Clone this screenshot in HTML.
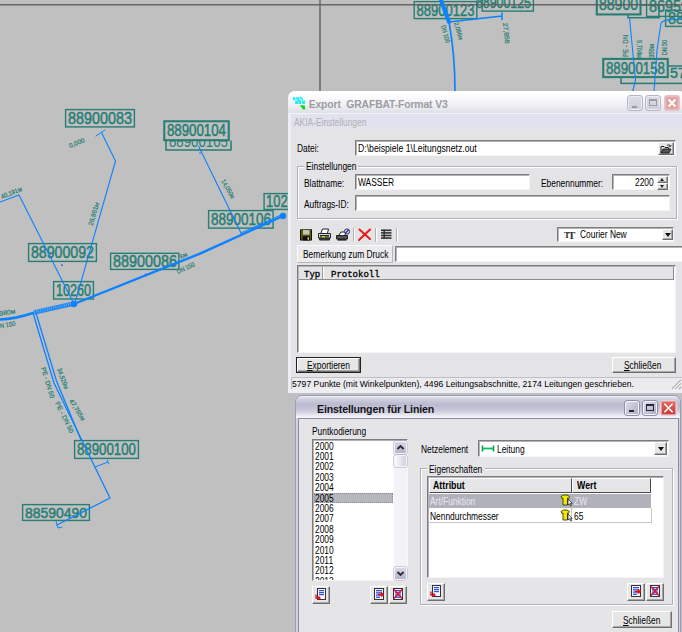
<!DOCTYPE html>
<html lang="de">
<head>
<meta charset="utf-8">
<title>Export GRAFBAT-Format V3</title>
<style>
html,body{margin:0;padding:0;}
body{width:682px;height:632px;overflow:hidden;background:#c0c0c0;position:relative;font-family:"Liberation Sans",sans-serif;font-size:11px;color:#000;}
#map{position:absolute;left:0;top:0;width:682px;height:632px;}
.abs{position:absolute;}
.win{position:absolute;box-sizing:border-box;}
.lbl{position:absolute;white-space:nowrap;line-height:12px;font-size:10px;transform:scaleX(.84);transform-origin:0 0;margin-top:1px;}
.inp{position:absolute;box-sizing:border-box;background:#fff;border:1px solid;border-color:#7c7c7c #f6f6f6 #f6f6f6 #7c7c7c;box-shadow:inset 1px 1px 0 #b4b4b4;white-space:nowrap;font-size:11px;line-height:13px;overflow:hidden;}
.btn{position:absolute;box-sizing:border-box;background:#e6e6e6;border:1px solid;border-color:#fff #6e6e6e #6e6e6e #fff;box-shadow:inset -1px -1px 0 #a8a8a8;text-align:center;font-size:11px;white-space:nowrap;}
.grp{position:absolute;box-sizing:border-box;border:1px solid #b2b2b6;box-shadow:inset 1px 1px 0 #fff, 1px 1px 0 #fff;}
.tb{position:absolute;box-sizing:border-box;width:16px;height:16px;border:1px solid #b6b6c4;border-radius:3px;background:linear-gradient(#dedee8,#cdcdd9);box-shadow:inset 0 0 0 1px #ececf3;}
.mono{position:absolute;font-family:"Liberation Mono",monospace;font-weight:normal;-webkit-text-stroke:0.3px #000;font-size:9px;line-height:11px;white-space:nowrap;}
.tri{position:absolute;width:0;height:0;border-style:solid;}
.sep{position:absolute;width:1px;height:14px;background:#b2b2b4;box-shadow:1px 0 0 #fff;}
.tb2{background:linear-gradient(135deg,#e0e0ea,#a9a9c0);border-color:#9090aa;box-shadow:inset 0 0 0 1px #f4f4fa;}
.sb{position:absolute;box-sizing:border-box;width:13px;height:13px;border:1px solid #f6f6fa;border-radius:2px;background:linear-gradient(#d8d8e6,#b4b4c8);box-shadow:0 0 0 0.5px #a0a0b8;}
u{text-decoration:underline;}
</style>
</head>
<body>
<svg id="map" width="682" height="632" viewBox="0 0 682 632">
<rect width="682" height="632" fill="#c0c0c0"/>
<defs><clipPath id="cp104"><rect x="166" y="141" width="66" height="10"/></clipPath></defs>
<g fill="none" stroke="#267e74" stroke-width="1.5" font-family="'Liberation Sans',sans-serif">
<g id="boxes">
<path d="M166 140.5 V150 H231 V140.5"/>
<g clip-path="url(#cp104)" stroke="none" fill="#267e74"><text x="169" y="147.3" font-size="15.6" textLength="59" lengthAdjust="spacingAndGlyphs">88900105</text></g>
<rect x="164" y="121" width="65" height="19.5" fill="#c0c0c0"/>
<rect x="621" y="66" width="69.0" height="17.4"/>
<rect x="603" y="58.6" width="65" height="18.8" fill="#c0c0c0"/>
<rect x="628" y="5" width="31.0" height="12.7"/>
<rect x="596.5" y="-5" width="44.3" height="19.7" fill="#c0c0c0"/>
</g>
<g id="boxtxt" stroke="none" fill="#267e74">
</g>
</g>
<g fill="#267e74" stroke="#267e74" stroke-width="0.45" font-family="'Liberation Sans',sans-serif">
<g fill="none" stroke-width="1.4">
<rect x="65.6" y="109.6" width="68.8" height="17.3"/>
<rect x="164.6" y="121.6" width="63.8" height="18.3"/>
<rect x="28.6" y="243.6" width="67.8" height="17.8"/>
<rect x="110.6" y="253.3" width="68.3" height="16.1"/>
<rect x="53.6" y="281.6" width="39.8" height="17.4"/>
<rect x="208.6" y="210.6" width="64.5" height="17.5"/>
<rect x="264.1" y="193.6" width="35.3" height="15.8"/>
<rect x="74.6" y="440.6" width="63.8" height="17.8"/>
<rect x="22.6" y="504.6" width="66.8" height="15.8"/>
<rect x="414.2" y="1.6" width="62.6" height="17.0"/>
<rect x="482.2" y="-7.4" width="51.2" height="18.5"/>
<rect x="597.1" y="-4.4" width="43.1" height="18.5"/>
<rect x="646.6" y="-4.4" width="42.8" height="20.8"/>
<rect x="665.6" y="10.4" width="23.8" height="16.0"/>
<rect x="603.6" y="59.2" width="63.8" height="17.6"/>
</g>
<g id="digits">
<text x="68" y="123.5" font-size="15.6" textLength="64" lengthAdjust="spacingAndGlyphs">88900083</text>
<text x="167" y="136.1" font-size="15.6" textLength="59" lengthAdjust="spacingAndGlyphs">88900104</text>
<text x="31" y="257.9" font-size="15.6" textLength="63" lengthAdjust="spacingAndGlyphs">88900092</text>
<text x="113" y="266.7" font-size="15.6" textLength="64" lengthAdjust="spacingAndGlyphs">88900086</text>
<text x="56" y="295.7" font-size="15.6" textLength="35" lengthAdjust="spacingAndGlyphs">10260</text>
<text x="211" y="224.9" font-size="15.6" textLength="60" lengthAdjust="spacingAndGlyphs">88900106</text>
<text x="266" y="206.9" font-size="15.6" textLength="36" lengthAdjust="spacingAndGlyphs">10261</text>
<text x="77" y="455.1" font-size="15.6" textLength="59" lengthAdjust="spacingAndGlyphs">88900100</text>
<text x="25" y="517.6" font-size="14" textLength="62" lengthAdjust="spacingAndGlyphs">88590490</text>
<text x="416.5" y="15.7" font-size="15.6" textLength="58" lengthAdjust="spacingAndGlyphs">88900123</text>
<text x="476" y="7.9" font-size="15.6" textLength="55" lengthAdjust="spacingAndGlyphs">88900125</text>
<text x="599" y="9.7" font-size="15.6" textLength="39" lengthAdjust="spacingAndGlyphs">88900</text>
<text x="649" y="11.9" font-size="15.6" textLength="40" lengthAdjust="spacingAndGlyphs">86959</text>
<text x="668" y="23.9" font-size="15.6" textLength="32" lengthAdjust="spacingAndGlyphs">8890</text>
<text x="606" y="73.7" font-size="15.6" textLength="59" lengthAdjust="spacingAndGlyphs">88900158</text>
<text x="670" y="78" font-size="14" textLength="16" lengthAdjust="spacingAndGlyphs">57</text>
</g>
<g id="smalltxt" stroke-width="0.2">
<text transform="translate(70 148) rotate(-22)" font-size="6.5">0,000</text>
<text transform="translate(2 199) rotate(-22)" font-size="6.5" textLength="22" lengthAdjust="spacingAndGlyphs">40,191м</text>
<text transform="translate(92.5 226) rotate(-74)" font-size="6.5" textLength="24" lengthAdjust="spacingAndGlyphs">26,961м</text>
<text transform="translate(221 181) rotate(60)" font-size="6.5" textLength="21" lengthAdjust="spacingAndGlyphs">14,050м</text>
<text transform="translate(178 274) rotate(-25)" font-size="6.5" textLength="19" lengthAdjust="spacingAndGlyphs">DN 150</text>
<text transform="translate(181 259) rotate(-25)" font-size="6">6м</text>
<text transform="translate(-6 317) rotate(-10)" font-size="6.5" textLength="22" lengthAdjust="spacingAndGlyphs">5,980м</text>
<text transform="translate(-4 329) rotate(-10)" font-size="6.5" textLength="20" lengthAdjust="spacingAndGlyphs">DN 150</text>
<text transform="translate(41 368) rotate(73)" font-size="6.5" textLength="32" lengthAdjust="spacingAndGlyphs">PE - DN 50</text>
<text transform="translate(57 369) rotate(70)" font-size="6.5" textLength="22" lengthAdjust="spacingAndGlyphs">34,529м</text>
<text transform="translate(55 403) rotate(64)" font-size="6.5" textLength="34" lengthAdjust="spacingAndGlyphs">PE - DN 50</text>
<text transform="translate(69 401) rotate(58)" font-size="6.5" textLength="24" lengthAdjust="spacingAndGlyphs">47,795м</text>
<text transform="translate(441 26) rotate(74)" font-size="6.5" textLength="18" lengthAdjust="spacingAndGlyphs">DN 100</text>
<text transform="translate(454 23) rotate(74)" font-size="6.5" textLength="18" lengthAdjust="spacingAndGlyphs">2,086м</text>
<text transform="translate(503 23) rotate(84)" font-size="6.5" textLength="21" lengthAdjust="spacingAndGlyphs">27,858</text>
<text transform="translate(628 57) rotate(-90)" font-size="6.5" textLength="22" lengthAdjust="spacingAndGlyphs">PE - DN</text>
<text transform="translate(636.5 40) rotate(90)" font-size="6.5" textLength="18" lengthAdjust="spacingAndGlyphs">9,704м</text>
<text transform="translate(654 58) rotate(-90)" font-size="6.5" textLength="14" lengthAdjust="spacingAndGlyphs">359м</text>
<text transform="translate(667 55) rotate(-90)" font-size="6.5" textLength="15" lengthAdjust="spacingAndGlyphs">DN 50</text>
</g>
</g>
<g stroke="#5e5e5e" stroke-width="1.5" opacity="0.9"><path d="M0 4.7 H682"/><path d="M320 0 V92"/></g>
<g id="pipes" fill="none" stroke="#0c82ff" stroke-linecap="round" stroke-linejoin="round">
<path d="M101.5 132.5 L115.5 161 L75 303" stroke-width="1.1"/>
<path d="M96 136 L105 130" stroke-width="1"/>
<path d="M0 202 L19 195 L74 304" stroke-width="1.1"/>
<path d="M198.5 146 L241 233" stroke-width="1.1"/>
<circle cx="200" cy="153" r="0.8" fill="#3060ff" stroke="none"/>
<path d="M0 319.5 C14 319 24 316 33 313 L74 304 L200 253.6 L283 216" stroke-width="2.4"/>
<path d="M34 312.6 L74 303.6" stroke-width="4.6" stroke-linecap="butt" opacity="0.8"/><path d="M34 312.6 L74 303.6" stroke="#c0c0c0" stroke-width="2.4" stroke-dasharray="0.8 1.4" stroke-linecap="butt" opacity="0.7"/>
<path d="M241 233 L283 214" stroke-width="1"/>
<path d="M33 313 L54 383 L110 498 L57 525" stroke-width="1.3"/>
<path d="M36 313 L56.5 381 L81 440" stroke-width="1.3"/>
<path d="M95 467 L108 462 M107 460 L109 464" stroke-width="1"/>
<path d="M56 521 L58 528 L62 527" stroke-width="1"/>
<path d="M441 0 L449 22" stroke-width="4"/>
<path d="M449 22 C452 38 455 60 455 92" stroke-width="1.7"/>
<path d="M449 22 L502 16 M502 13 V19.5" stroke-width="1.5"/>
<path d="M629.5 18 L635.5 80 L632.5 92" stroke-width="1.1"/>
<path d="M682 19.5 C672 19.5 664 19 661 23 L657 50 L654 92" stroke-width="1.1"/>
</g>
<g fill="#4a4aff"><circle cx="62" cy="265.2" r="0.9"/><circle cx="145.6" cy="274.4" r="0.9"/></g>
<circle cx="74" cy="304" r="3.2" fill="#0c82ff"/>
<circle cx="283" cy="216" r="3.2" fill="#0c82ff"/>
</svg>

<!-- ===== Window 1 ===== -->
<div class="abs" id="w1" style="left:288px;top:91px;width:398px;height:302px;background:#eeeef5;border-radius:7px 7px 0 0;"></div>
<div class="abs" id="w1title" style="left:288px;top:91px;width:398px;height:22px;border-radius:7px 7px 0 0;background:linear-gradient(#ffffff 0,#fbfbfd 30%,#ededf3 70%,#dfdfe9 100%);"></div>
<div class="abs" id="w1menu" style="left:291px;top:113px;width:392px;height:16px;background:#e2e2ee;border-top:1px solid #f4f4f8;box-sizing:border-box"></div>
<div class="abs" id="w1body" style="left:291px;top:129px;width:392px;height:248px;background:#e4e4e6;"></div>
<!-- app icon -->
<svg class="abs" style="left:292px;top:96px" width="15" height="15" viewBox="0 0 15 15"><g fill="#22eef0"><rect x="1" y="1.2" width="2.4" height="3"/><rect x="4.2" y="1" width="2.6" height="2.6"/><rect x="7.6" y="0.8" width="2" height="2.4"/><rect x="9.4" y="2.2" width="1.6" height="2"/><rect x="3.2" y="4.6" width="3" height="3.4"/><rect x="6.6" y="4.2" width="2.6" height="3.8"/><rect x="10" y="4.6" width="3.2" height="3.2"/><rect x="5.6" y="3" width="2" height="2"/></g><path d="M7.8 9 L12.8 9.6 L13.2 13.4 L11 13.4 Z" fill="#08e008"/></svg>
<div class="abs" id="t1" style="left:308.7px;top:98.2px;font-weight:bold;font-size:10.4px;line-height:14px;color:#9c9ca2;white-space:nowrap;letter-spacing:-0.14px;">Export&nbsp; GRAFBAT-Format V3</div>
<!-- title buttons -->
<div class="tb" style="left:627px;top:95px;"><i style="position:absolute;left:4px;top:10px;width:5px;height:2px;background:#9a9aa6"></i></div>
<div class="tb" style="left:645px;top:95px;"><i style="position:absolute;left:3px;top:3px;width:8px;height:7px;border:1px solid #9a9aa6;border-top-width:2px;box-sizing:border-box"></i></div>
<div class="tb" style="left:664px;top:95px;background:#e0a3a1;border-color:#e2c4c6;box-shadow:inset 0 0 0 1px #ecc0c0;"><svg width="14" height="14" viewBox="0 0 14 14" style="position:absolute;left:0;top:0"><path d="M3.5 3.5 L10.5 10.5 M10.5 3.5 L3.5 10.5" stroke="#fff" stroke-width="1.8"/></svg></div>
<div class="lbl" style="left:294px;top:115.5px;color:#b0b0b2;">AKIA-Einstellungen</div>

<div class="lbl" style="left:297px;top:142px;">Datei:</div>
<div class="inp" style="left:355px;top:140px;width:321px;height:16px;"><span class="lbl" style="left:2px;top:1px;transform:scaleX(.868)">D:\beispiele 1\Leitungsnetz.out</span></div>
<div class="btn" style="left:658px;top:142px;width:16px;height:13px;"><svg width="12" height="10" viewBox="0 0 12 10" style="position:absolute;left:1px;top:1px"><path d="M1 9 V2.5 H4 L5 3.5 H8.5 V5" fill="none" stroke="#222" stroke-width="1"/><path d="M1 9 L3 5 H11 L9 9 Z" fill="#555" stroke="#222" stroke-width="1"/><path d="M7 1.5 C8.5 0.3 10 0.8 10.5 2.5 M10.5 2.5 l-1.6 -.3 M10.5 2.5 l.6 -1.4" stroke="#222" stroke-width="0.9" fill="none"/></svg></div>

<div class="grp" style="left:297px;top:165.5px;width:380px;height:53.5px;"></div>
<div class="abs" style="left:304px;top:160px;width:54px;height:12px;background:#e4e4e6"></div>
<div class="lbl" style="left:306px;top:160px;">Einstellungen</div>
<div class="lbl" style="left:303.5px;top:176.7px;">Blattname:</div>
<div class="inp" style="left:355px;top:174px;width:175px;height:16px;"><span class="lbl" style="left:1.5px;top:1px;">WASSER</span></div>
<div class="lbl" style="left:541px;top:176.7px;">Ebenennummer:</div>
<div class="inp" style="left:612px;top:174px;width:58px;height:16px;"><span class="lbl" style="left:22px;top:1px;">2200</span></div>
<div class="btn" style="left:657px;top:176px;width:11px;height:7px;"><i class="tri" style="left:2px;top:1px;border-width:0 2.5px 3px 2.5px;border-color:transparent transparent #222 transparent"></i></div>
<div class="btn" style="left:657px;top:183px;width:11px;height:7px;"><i class="tri" style="left:2px;top:1px;border-width:3px 2.5px 0 2.5px;border-color:#222 transparent transparent transparent"></i></div>
<div class="lbl" style="left:303.5px;top:197.7px;">Auftrags-ID:</div>
<div class="inp" style="left:355px;top:195px;width:315px;height:16px;"></div>

<!-- toolbar -->
<svg class="abs" style="left:300px;top:229px" width="12" height="12" viewBox="0 0 12 12"><rect x="0" y="0.3" width="12" height="11.2" fill="#121200"/><rect x="1" y="1.2" width="10" height="9.4" fill="#5c5c08"/><rect x="3" y="1" width="6.4" height="4.6" fill="#c4c4bc"/><rect x="2.6" y="7.2" width="7.4" height="4.3" fill="#101008"/><rect x="7.6" y="8.2" width="1.4" height="2.6" fill="#c8c8c8"/></svg>
<svg class="abs" style="left:317px;top:228px" width="15" height="13" viewBox="0 0 15 13"><path d="M4 5 L5.5 1 H11.5 L10.5 5" fill="#fff" stroke="#222" stroke-width="1"/><path d="M1.5 5.5 H13.5 V10 H1.5 Z" fill="#d8d8d8" stroke="#222" stroke-width="1"/><path d="M2.5 10 H12.5 V12 H2.5 Z" fill="#444" stroke="#222" stroke-width="1"/><rect x="3" y="7" width="9" height="1.6" fill="#222"/><rect x="5" y="8.2" width="3" height="1.2" fill="#e6e600"/></svg>
<svg class="abs" style="left:335px;top:228px" width="16" height="13" viewBox="0 0 16 13"><path d="M4 7 L6 4 H11 L10 7" fill="#fff" stroke="#222" stroke-width="1"/><path d="M1.5 7.5 H12.5 V11 H1.5 Z" fill="#555" stroke="#222" stroke-width="1"/><rect x="2.5" y="11" width="9" height="1.6" fill="#222"/><circle cx="12" cy="3.5" r="2.6" fill="#dde" stroke="#334" stroke-width="1"/><path d="M10.3 5.2 L13.7 1.8" stroke="#2030d0" stroke-width="1.3"/></svg>
<i class="sep" style="left:353px;top:228px"></i>
<svg class="abs" style="left:358px;top:228px" width="14" height="13" viewBox="0 0 14 13"><path d="M1.5 1.5 L12 11 M12 1.5 L1 12" stroke="#f01818" stroke-width="2" stroke-linecap="round" fill="none"/></svg>
<i class="sep" style="left:375px;top:228px"></i>
<svg class="abs" style="left:380px;top:229px" width="12" height="11" viewBox="0 0 12 11"><g fill="#333"><rect x="1" y="0.5" width="10.5" height="1.6"/><rect x="1" y="3.1" width="10.5" height="1.6"/><rect x="1" y="5.7" width="10.5" height="1.6"/><rect x="1" y="8.3" width="10.5" height="1.6"/><rect x="3.5" y="0.5" width="1.4" height="9.4"/></g></svg>
<i class="sep" style="left:396px;top:228px"></i>
<!-- combo -->
<div class="inp" style="left:557px;top:227px;width:117px;height:15px;"><span class="lbl" style="left:22px;top:0px;">Courier New</span>
<span class="abs" style="left:6px;top:0px;font-family:'Liberation Serif',serif;font-weight:bold;font-size:9px;line-height:12px;letter-spacing:-2px;color:#333">T<span style="font-size:11px;position:relative;top:1px">T</span></span></div>
<div class="btn" style="left:662px;top:229px;width:11px;height:11px;"><i class="tri" style="left:2px;top:3px;border-width:4px 3px 0 3px;border-color:#111 transparent transparent transparent"></i></div>
<div class="abs" style="left:297px;top:245px;width:96px;height:18px;background:#ebebed;border:1px solid;border-color:#fafafa #b8b8b8 #b8b8b8 #fafafa;box-sizing:border-box"></div>
<div class="lbl" style="left:303px;top:248px;">Bemerkung zum Druck</div>
<div class="inp" style="left:395px;top:246px;width:292px;height:16px;"></div>

<div class="inp" style="left:297px;top:265px;width:379px;height:88px;"></div>
<div class="abs" style="left:299px;top:267px;width:375px;height:13px;background:#e4e4e6;border-bottom:1px solid #8c8c8c;border-right:1px solid #8c8c8c;box-sizing:border-box"></div>
<div class="abs" style="left:322px;top:267px;width:1px;height:12px;background:#9a9a9a;box-shadow:1px 0 0 #fff"></div>
<div class="mono" style="left:304px;top:269.5px;">Typ</div>
<div class="mono" style="left:331px;top:269.5px;">Protokoll</div>

<div class="abs" style="left:296px;top:357px;width:65px;height:16px;background:#222;"></div>
<div class="btn" style="left:297px;top:358px;width:63px;height:14px;"><span class="lbl" style="left:9px;top:0px;"><u>E</u>xportieren</span></div>
<div class="btn" style="left:612px;top:357px;width:64px;height:16px;"><span class="lbl" style="left:11px;top:1px;"><u>S</u>chließen</span></div>

<div class="abs" style="left:291px;top:377px;width:392px;height:12px;background:#ebebed;border-top:1px solid #c0c0c4;border-left:1px solid #c0c0c4;box-sizing:border-box"></div>
<svg class="abs" style="left:670px;top:378px" width="12" height="12" viewBox="0 0 12 12"><path d="M2 11 L11 2 M5.5 11 L11 5.5 M9 11 L11 9" stroke="#a6a6aa" stroke-width="1.1"/><path d="M3 11 L11 3 M6.5 11 L11 6.5" stroke="#fff" stroke-width="0.8"/></svg>
<div class="abs" id="status" style="left:292px;top:378.5px;font-size:9px;line-height:11px;white-space:nowrap;transform-origin:0 0;transform:scaleX(.96);">5797 Punkte (mit Winkelpunkten), 4496 Leitungsabschnitte, 2174 Leitungen geschrieben.</div>

<!-- ===== Window 2 ===== -->
<div class="abs" id="w2" style="left:295px;top:395px;width:386px;height:245px;box-sizing:border-box;background:#d2d2e0;border:1px solid #9c9cb2;border-radius:7px 7px 0 0;"></div>
<div class="abs" id="w2title" style="left:296px;top:396px;width:384px;height:22px;border-radius:6px 6px 0 0;background:linear-gradient(#f2f2f8 0,#d2d2e1 12%,#babad0 38%,#cbcbdc 68%,#ececf4 90%,#f8f8fc 100%);"></div>
<div class="abs" id="w2body" style="left:298px;top:418px;width:381px;height:220px;box-sizing:border-box;background:#e5e5e8;border:1px solid #8c8caa;border-bottom:0"></div>
<div class="abs" id="t2" style="left:317px;top:402px;font-weight:bold;font-size:10.6px;line-height:14px;color:#141418;white-space:nowrap;letter-spacing:-0.15px;">Einstellungen für Linien</div>
<div class="tb tb2" style="left:624px;top:400px;"><i style="position:absolute;left:4px;top:9px;width:5px;height:2px;background:#26263a"></i></div>
<div class="tb tb2" style="left:642px;top:400px;"><i style="position:absolute;left:3px;top:3px;width:8px;height:7px;border:1px solid #26263a;border-top-width:2px;box-sizing:border-box"></i></div>
<div class="tb" style="left:660px;top:400px;width:17px;background:linear-gradient(#e06a66,#c8383a);border-color:#e8d0d4;box-shadow:inset 0 0 0 1px #e89a98;"><svg width="15" height="14" viewBox="0 0 15 14" style="position:absolute;left:0;top:0"><path d="M3.4 2.8 L11.6 11.2 M11.6 2.8 L3.4 11.2" stroke="#fff" stroke-width="1.6"/></svg></div>

<div class="lbl" style="left:312px;top:425px;">Puntkodierung</div>
<div class="inp" style="left:312px;top:439px;width:96px;height:142px;"></div>
<div class="abs" style="left:314px;top:493px;width:79px;height:10px;background:#b6b6be;outline:1px dotted #8a8a92;outline-offset:-1px"></div>
<div class="abs" style="left:314px;top:441px;width:92px;height:139px;overflow:hidden"><div style="position:absolute;left:-314px;top:-441px">
<div class="lbl" style="left:315px;top:439.5px;">2000</div>
<div class="lbl" style="left:315px;top:449.9px;">2001</div>
<div class="lbl" style="left:315px;top:460.3px;">2002</div>
<div class="lbl" style="left:315px;top:470.7px;">2003</div>
<div class="lbl" style="left:315px;top:481.1px;">2004</div>
<div class="lbl" style="left:315px;top:491.5px;">2005</div>
<div class="lbl" style="left:315px;top:501.9px;">2006</div>
<div class="lbl" style="left:315px;top:512.3px;">2007</div>
<div class="lbl" style="left:315px;top:522.7px;">2008</div>
<div class="lbl" style="left:315px;top:533.1px;">2009</div>
<div class="lbl" style="left:315px;top:543.5px;">2010</div>
<div class="lbl" style="left:315px;top:553.9px;">2011</div>
<div class="lbl" style="left:315px;top:564.3px;">2012</div>
<div class="lbl" style="left:315px;top:574.7px;">2013</div>
</div></div>
<!-- scrollbar -->
<div class="abs" style="left:394px;top:441px;width:13px;height:139px;background:#f3f3f7"></div>
<div class="sb" style="left:394px;top:441px;"><svg width="11" height="11" viewBox="0 0 11 11" style="position:absolute;left:0;top:0"><path d="M2.5 7 L5.5 4 L8.5 7" stroke="#2a2a3a" stroke-width="1.8" fill="none"/></svg></div>
<div class="sb" style="left:394px;top:455px;height:12px;background:linear-gradient(90deg,#fafafc,#d0d0de)"></div>
<div class="sb" style="left:394px;top:567px;"><svg width="11" height="11" viewBox="0 0 11 11" style="position:absolute;left:0;top:0"><path d="M2.5 4 L5.5 7 L8.5 4" stroke="#2a2a3a" stroke-width="1.8" fill="none"/></svg></div>
<div class="btn" style="left:312px;top:586px;width:18px;height:18px;"><svg width="12" height="13" viewBox="0 0 12 13" style="position:absolute;left:2px;top:1px"><rect x="2.5" y="0.5" width="8" height="11" fill="#f4f4ff" stroke="#333" stroke-width="1"/><rect x="4" y="2" width="5" height="1.2" fill="#3050e0"/><rect x="4" y="4" width="5" height="1.2" fill="#3050e0"/><rect x="4" y="6" width="5" height="1.2" fill="#3050e0"/><path d="M1 6.5 V10 H5 M3.4 8.4 L5 10 L3.4 11.6" stroke="#e01010" stroke-width="1.3" fill="none"/></svg></div>
<div class="btn" style="left:370px;top:586px;width:18px;height:18px;"><svg width="12" height="13" viewBox="0 0 12 13" style="position:absolute;left:2px;top:1px"><rect x="1.5" y="0.5" width="9" height="11" fill="#f4f4ff" stroke="#333" stroke-width="1"/><rect x="3" y="2" width="6" height="1.3" fill="#3050e0"/><rect x="3" y="4.2" width="6" height="1.3" fill="#3050e0"/><rect x="3" y="6.4" width="6" height="1.3" fill="#3050e0"/><rect x="3" y="8.6" width="4" height="1.3" fill="#3050e0"/><path d="M5 6.5 H10 M8 4.5 L10 6.5 L8 8.5" stroke="#e01010" stroke-width="1.6" fill="none"/></svg></div>
<div class="btn" style="left:389px;top:586px;width:18px;height:18px;"><svg width="12" height="13" viewBox="0 0 12 13" style="position:absolute;left:2px;top:1px"><rect x="1.5" y="0.5" width="9" height="11" fill="#f4f4ff" stroke="#333" stroke-width="1"/><rect x="3" y="2" width="6" height="1.3" fill="#3050e0"/><rect x="3" y="4.2" width="6" height="1.3" fill="#3050e0"/><rect x="3" y="6.4" width="6" height="1.3" fill="#3050e0"/><rect x="3" y="8.6" width="6" height="1.3" fill="#3050e0"/><path d="M2 1.5 L10 10.5 M10 1.5 L2 10.5" stroke="#e01030" stroke-width="1.4" fill="none"/></svg></div>

<div class="lbl" style="left:421px;top:443px;">Netzelement</div>
<div class="inp" style="left:478px;top:440px;width:191px;height:17px;"><span class="lbl" style="left:18px;top:2px;">Leitung</span>
<svg width="14" height="9" viewBox="0 0 14 9" style="position:absolute;left:2px;top:3px"><path d="M1.5 4.5 H12.5" stroke="#10c060" stroke-width="1.8"/><path d="M1.5 1.5 V7.5 M12.5 1.5 V7.5" stroke="#10a050" stroke-width="1.6"/></svg></div>
<div class="btn" style="left:654px;top:442px;width:13px;height:13px;"><i class="tri" style="left:3px;top:4px;border-width:4px 3px 0 3px;border-color:#111 transparent transparent transparent"></i></div>

<div class="grp" style="left:420px;top:468px;width:253px;height:137px;"></div>
<div class="abs" style="left:427px;top:462px;width:58px;height:12px;background:#e5e5e8"></div>
<div class="lbl" style="left:429px;top:462.5px;">Eigenschaften</div>
<div class="inp" style="left:427px;top:476px;width:237px;height:102px;"></div>
<div class="abs" style="left:429px;top:478px;width:143px;height:15px;background:#e6e6e8;border:1px solid;border-color:#fff #4a4a4a #4a4a4a #fff;border-bottom-width:1.5px;box-sizing:border-box"></div>
<div class="abs" style="left:572px;top:478px;width:79px;height:15px;background:#e6e6e8;border:1px solid;border-color:#fff #4a4a4a #4a4a4a #fff;border-bottom-width:1.5px;box-sizing:border-box"></div>
<div class="lbl" style="left:433px;top:479px;font-weight:bold;transform:scaleX(.88)">Attribut</div>
<div class="lbl" style="left:577px;top:479px;font-weight:bold;transform:scaleX(.88)">Wert</div>
<div class="abs" style="left:429px;top:493.5px;width:222px;height:14px;background:#b1b1bc"></div>
<div class="abs" style="left:429px;top:507.5px;width:223px;height:15px;box-sizing:border-box;border-right:1px solid #c8c8c8;border-bottom:1px solid #c8c8c8"></div>
<div class="abs" style="left:571px;top:507.5px;width:1px;height:15px;background:#c8c8c8"></div>
<div class="lbl" style="left:430px;top:494.5px;color:#e8e8ec">Art/Funktion</div>
<div class="lbl" style="left:574px;top:494.5px;color:#e8e8ec">ZW</div>
<div class="lbl" style="left:430px;top:509.7px;">Nenndurchmesser</div>
<div class="lbl" style="left:574px;top:509.7px;">65</div>
<div class="abs" style="left:560px;top:493.5px;"><svg width="13" height="13" viewBox="0 0 13 13"><path d="M1 2.5 L3.5 1 H7 L9.5 2.5 L8.5 4.5 L7.5 4 V11 H3 V4 L2 4.5 Z" fill="#f0e800" stroke="#3a3a00" stroke-width="0.9"/><path d="M8 5 V11 L9.5 9.8 L10.5 12 L11.4 11.6 L10.4 9.4 H12.2 Z" fill="#fff" stroke="#111" stroke-width="0.7"/></svg></div>
<div class="abs" style="left:560px;top:508.5px;"><svg width="13" height="13" viewBox="0 0 13 13"><path d="M1 2.5 L3.5 1 H7 L9.5 2.5 L8.5 4.5 L7.5 4 V11 H3 V4 L2 4.5 Z" fill="#f0e800" stroke="#3a3a00" stroke-width="0.9"/><path d="M8 5 V11 L9.5 9.8 L10.5 12 L11.4 11.6 L10.4 9.4 H12.2 Z" fill="#fff" stroke="#111" stroke-width="0.7"/></svg></div>
<div class="btn" style="left:427px;top:583px;width:18px;height:18px;"><svg width="12" height="13" viewBox="0 0 12 13" style="position:absolute;left:2px;top:1px"><rect x="2.5" y="0.5" width="8" height="11" fill="#f4f4ff" stroke="#333" stroke-width="1"/><rect x="4" y="2" width="5" height="1.2" fill="#3050e0"/><rect x="4" y="4" width="5" height="1.2" fill="#3050e0"/><rect x="4" y="6" width="5" height="1.2" fill="#3050e0"/><path d="M1 6.5 V10 H5 M3.4 8.4 L5 10 L3.4 11.6" stroke="#e01010" stroke-width="1.3" fill="none"/></svg></div>
<div class="btn" style="left:626.5px;top:583px;width:18px;height:18px;"><svg width="12" height="13" viewBox="0 0 12 13" style="position:absolute;left:2px;top:1px"><rect x="1.5" y="0.5" width="9" height="11" fill="#f4f4ff" stroke="#333" stroke-width="1"/><rect x="3" y="2" width="6" height="1.3" fill="#3050e0"/><rect x="3" y="4.2" width="6" height="1.3" fill="#3050e0"/><rect x="3" y="6.4" width="6" height="1.3" fill="#3050e0"/><rect x="3" y="8.6" width="4" height="1.3" fill="#3050e0"/><path d="M5 6.5 H10 M8 4.5 L10 6.5 L8 8.5" stroke="#e01010" stroke-width="1.6" fill="none"/></svg></div>
<div class="btn" style="left:646px;top:583px;width:18px;height:18px;"><svg width="12" height="13" viewBox="0 0 12 13" style="position:absolute;left:2px;top:1px"><rect x="1.5" y="0.5" width="9" height="11" fill="#f4f4ff" stroke="#333" stroke-width="1"/><rect x="3" y="2" width="6" height="1.3" fill="#3050e0"/><rect x="3" y="4.2" width="6" height="1.3" fill="#3050e0"/><rect x="3" y="6.4" width="6" height="1.3" fill="#3050e0"/><rect x="3" y="8.6" width="6" height="1.3" fill="#3050e0"/><path d="M2 1.5 L10 10.5 M10 1.5 L2 10.5" stroke="#e01030" stroke-width="1.4" fill="none"/></svg></div>
<div class="btn" style="left:612px;top:611px;width:60px;height:17px;"><span class="lbl" style="left:10px;top:2px;"><u>S</u>chließen</span></div>
</body>
</html>
